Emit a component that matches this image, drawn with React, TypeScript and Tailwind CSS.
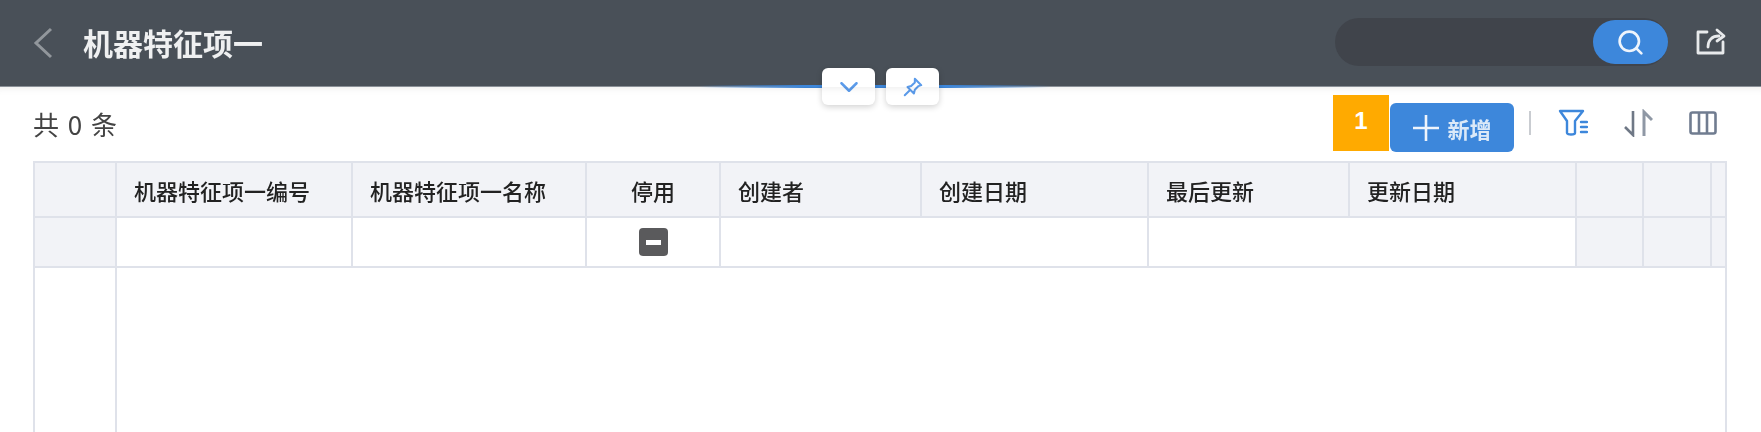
import { ChevronDown, Search } from "lucide-react";

const cols = "grid grid-cols-[82px_236px_234px_134px_201px_227px_201px_227px_67px_68px_1fr]";
const cjk = { fontFamily: '"Noto Sans CJK SC", "Liberation Sans", sans-serif' };

function Head({ children, center }: { children?: React.ReactNode; center?: boolean }) {
  return (
    <div className={`flex h-[53px] items-center border-r-2 border-[#dfe2ea] bg-[#f2f3f7] text-[22px] font-medium leading-none text-[#222] last:border-r-0 ${center ? "justify-center" : "pl-[17px]"}`}>
      {children ? <span className="blur-[0.7px]">{children}</span> : null}
    </div>
  );
}

function PinIcon() {
  return (
    <svg className="blur-[0.5px]" width="22" height="22" viewBox="0 0 24 24" fill="none" stroke="#5b9bea" strokeWidth="2.2" strokeLinejoin="round" strokeLinecap="round">
      <path d="M14 3l7 7-3 1-4 4-1 4-7-7 4-1 4-4 0-4z" />
      <path d="M8 16l-5 5" />
    </svg>
  );
}

export default function App() {
  return (
    <div className="flex h-[432px] w-[1761px] flex-col overflow-hidden bg-white" style={cjk}>
      <header className="relative flex h-[87px] shrink-0 items-center justify-between border-b border-[#8a9097] bg-[#495058] pl-[33px] pr-[35px]">
        <div className="flex items-center">
          <svg className="blur-[0.6px]" width="20" height="32" viewBox="0 0 20 32" fill="none" stroke="#92979c" strokeWidth="3">
            <path d="M18 2L3 16l15 14" />
          </svg>
          <span className="ml-[30px] mb-[2px] text-[30px] font-bold leading-none text-[#eff0f1] blur-[0.7px]">机器特征项一</span>
        </div>
        <div className="mb-[2px] flex items-center">
          <div className="flex h-[48px] w-[333px] justify-end rounded-full bg-[#40444b] py-[2px]">
            <div className="flex h-[44px] w-[75px] items-center justify-center rounded-full bg-[#3d87db]">
              <Search className="h-[29px] w-[29px] text-[#eef4fc] blur-[0.5px]" strokeWidth={2.2} />
            </div>
          </div>
          <svg className="ml-[28px] mb-[3px] blur-[0.6px]" width="30" height="28" viewBox="0 0 30 28" fill="none" stroke="#e8eaec" strokeWidth="2.8" strokeLinecap="round" strokeLinejoin="round">
            <path d="M11 5H2v21h25V15" />
            <path d="M12 20c0-7 4-11 11-11" />
            <path d="M21 3l7 6-7 5" />
          </svg>
        </div>
        <div className="absolute bottom-[-2px] left-[700px] h-[3px] w-[350px] bg-[linear-gradient(90deg,transparent,#3d87db_30%,#3d87db_70%,transparent)]" />
        <div className="absolute left-[822px] top-[68px] flex gap-[11px]">
          <div className="flex h-[37px] w-[53px] items-center justify-center rounded-md bg-white shadow-[0_2px_6px_rgba(0,0,0,0.18)]">
            <ChevronDown className="h-[30px] w-[30px] text-[#5b9bea] blur-[0.5px]" strokeWidth={2} />
          </div>
          <div className="flex h-[37px] w-[53px] items-center justify-center rounded-md bg-white shadow-[0_2px_6px_rgba(0,0,0,0.18)]">
            <PinIcon />
          </div>
        </div>
      </header>

      <div className="relative flex h-[74px] shrink-0 items-start justify-between pl-[33px] pr-[44px] shadow-[inset_0_8px_8px_-8px_rgba(0,0,0,0.1)]">
        <span className="mt-[24px] text-[26px] leading-none tracking-[1.5px] text-[#444] blur-[0.6px]">共 0 条</span>
        <div className="mt-[8px] flex items-center">
          <div className="flex h-[56px] w-[56px] items-center justify-center self-end bg-[#ffaa00] pb-[4px] text-[24px] font-bold text-white" style={{ fontFamily: '"Liberation Sans", sans-serif' }}>
            1
          </div>
          <div className="-mb-[1px] ml-[1px] flex h-[49px] w-[124px] items-center justify-center self-end rounded-md bg-[#3d87db] text-[22px] font-bold leading-none text-[#dbe9f8]">
            <svg className="mr-[7px] blur-[0.5px]" width="28" height="28" viewBox="0 0 28 28" stroke="#eef4fc" strokeWidth="2.6">
              <path d="M14 1v26M1 14h26" />
            </svg>
            <span className="blur-[0.7px]">新增</span>
          </div>
          <div className="ml-[15px] h-[24px] w-[2px] self-center bg-[#c9ccd1]" />
          <svg className="ml-[27px] self-center blur-[0.5px]" width="30" height="28" viewBox="0 0 30 28" fill="none" stroke="#3d87db" strokeWidth="2.4" strokeLinejoin="round" strokeLinecap="round">
            <path d="M2 2h23l-8 10v12c0 2-8 2-8 0V12z" />
            <path d="M23 13h6M23 18h6M23 23h6" />
          </svg>
          <svg className="ml-[35px] self-center blur-[0.5px]" width="30" height="28" viewBox="0 0 30 28" fill="none" strokeLinejoin="miter">
            <path d="M10 2v24L2 18" stroke="#6f7886" strokeWidth="2.6" />
            <path d="M21 27V3l8 8" stroke="#8f98a5" strokeWidth="3" />
          </svg>
          <svg className="ml-[36px] self-center blur-[0.5px]" width="28" height="24" viewBox="0 0 28 24" fill="none" stroke="#707c90" strokeWidth="2.6">
            <rect x="1.500" y="1.500" width="25" height="21" rx="2" />
            <path d="M10 2v20M18 2v20" />
          </svg>
        </div>
      </div>

      <div className="ml-[33px] flex w-[1694px] flex-1 flex-col border-x-2 border-t-2 border-[#dfe2ea]">
        <div className={`${cols} border-b-2 border-[#dfe2ea]`}>
          <Head center />
          <Head>机器特征项一编号</Head>
          <Head>机器特征项一名称</Head>
          <Head center>停用</Head>
          <Head>创建者</Head>
          <Head>创建日期</Head>
          <Head>最后更新</Head>
          <Head>更新日期</Head>
          <Head center />
          <Head center />
          <Head center />
        </div>
        <div className={`${cols} h-[50px] border-b-2 border-[#dfe2ea]`}>
          <div className="border-r-2 border-[#dfe2ea] bg-[#f2f3f7]" />
          <div className="border-r-2 border-[#dfe2ea]" />
          <div className="border-r-2 border-[#dfe2ea]" />
          <div className="flex items-center justify-center border-r-2 border-[#dfe2ea]">
            <div className="flex h-[28px] w-[29px] items-center justify-center rounded-[4px] bg-[#5a5a5c]">
              <div className="h-[5px] w-[15px] bg-white blur-[0.5px]" />
            </div>
          </div>
          <div className="col-span-2 border-r-2 border-[#dfe2ea]" />
          <div className="col-span-2 border-r-2 border-[#dfe2ea]" />
          <div className="border-r-2 border-[#dfe2ea] bg-[#f2f3f7]" />
          <div className="border-r-2 border-[#dfe2ea] bg-[#f2f3f7]" />
          <div className="bg-[#f2f3f7]" />
        </div>
        <div className="flex-1">
          <div className="h-full w-[82px] border-r-2 border-[#dfe2ea]" />
        </div>
      </div>
    </div>
  );
}
